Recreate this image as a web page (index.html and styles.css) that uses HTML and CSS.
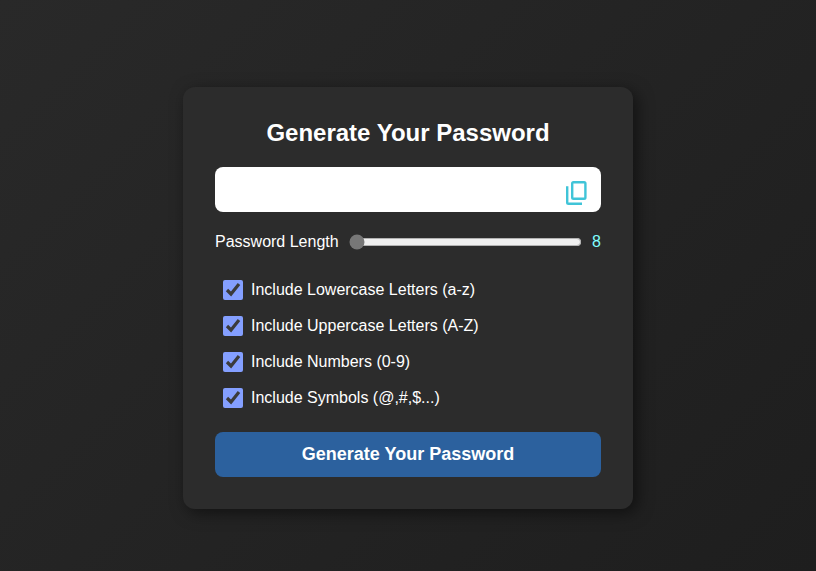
FILE: index.html
```html
<!DOCTYPE html>
<html lang="en">
<head>
<meta charset="utf-8">
<title>Password Generator</title>
<link rel="stylesheet" href="styles.css">
</head>
<body>
<main class="container">
  <h2>Generate Your Password</h2>
  <div class="input-box">
    <input type="text" class="password" aria-label="Password" readonly>
    <svg class="copy" viewBox="0 0 21 24" aria-hidden="true"><rect x="6.200" y="1.200" width="13.200" height="16.600" rx="1.300"/><path d="M1.200 5.200v16.300q0 1.300 1.300 1.300H16"/></svg>
  </div>
  <div class="length-row">
    <label for="len">Password Length</label>
    <input type="range" id="len" class="slider" min="8" max="32" value="8">
    <span class="value">8</span>
  </div>
  <div class="options">
    <label class="option"><input type="checkbox" checked>Include Lowercase Letters (a-z)</label>
    <label class="option"><input type="checkbox" checked>Include Uppercase Letters (A-Z)</label>
    <label class="option"><input type="checkbox" checked>Include Numbers (0-9)</label>
    <label class="option"><input type="checkbox" checked>Include Symbols (@,#,$...)</label>
  </div>
  <button type="button" class="generate">Generate Your Password</button>
</main>
</body>
</html>
```
FILE: styles.css
```css
* {
  box-sizing: border-box;
  margin: 0;
}

body {
  min-height: 100vh;
  display: flex;
  justify-content: center;
  padding-top: 87px;
  background: linear-gradient(135deg, #292929, #1e1e1e);
  color: #fff;
  font-family: "Liberation Sans", Arial, sans-serif;
  font-size: 16px;
}

.container {
  width: 450px;
  height: 422px;
  padding: 32px;
  border-radius: 12px;
  background: #2c2c2c;
  box-shadow: 4px 4px 16px rgba(0, 0, 0, 0.5);
}

h2 {
  margin-bottom: 20px;
  font-size: 24px;
  line-height: 28px;
  text-align: center;
}

.input-box {
  position: relative;
  height: 45px;
}

.password {
  display: block;
  width: 100%;
  height: 45px;
  border: 0;
  border-radius: 8px;
  background: #fff;
}

.copy {
  position: absolute;
  top: 14px;
  right: 14px;
  width: 21px;
  height: 24px;
  fill: none;
  stroke: #40c4d8;
  stroke-width: 2.4;
}

.length-row {
  display: flex;
  align-items: center;
  gap: 10px;
  height: 20px;
  margin-top: 20px;
}

.slider {
  flex: 1;
  min-width: 0;
  accent-color: #777;
}

.value {
  color: #80ffff;
}

.options {
  display: grid;
  gap: 16px;
  margin: 28px 0 24px 8px;
}

.option {
  display: flex;
  align-items: center;
  gap: 8px;
  height: 20px;
}

.option input {
  width: 20px;
  height: 20px;
  accent-color: #849fff;
}

.generate {
  width: 100%;
  height: 45px;
  border: 0;
  border-radius: 8px;
  background: #2c619e;
  color: #fff;
  font: bold 18px "Liberation Sans", Arial, sans-serif;
}
```
